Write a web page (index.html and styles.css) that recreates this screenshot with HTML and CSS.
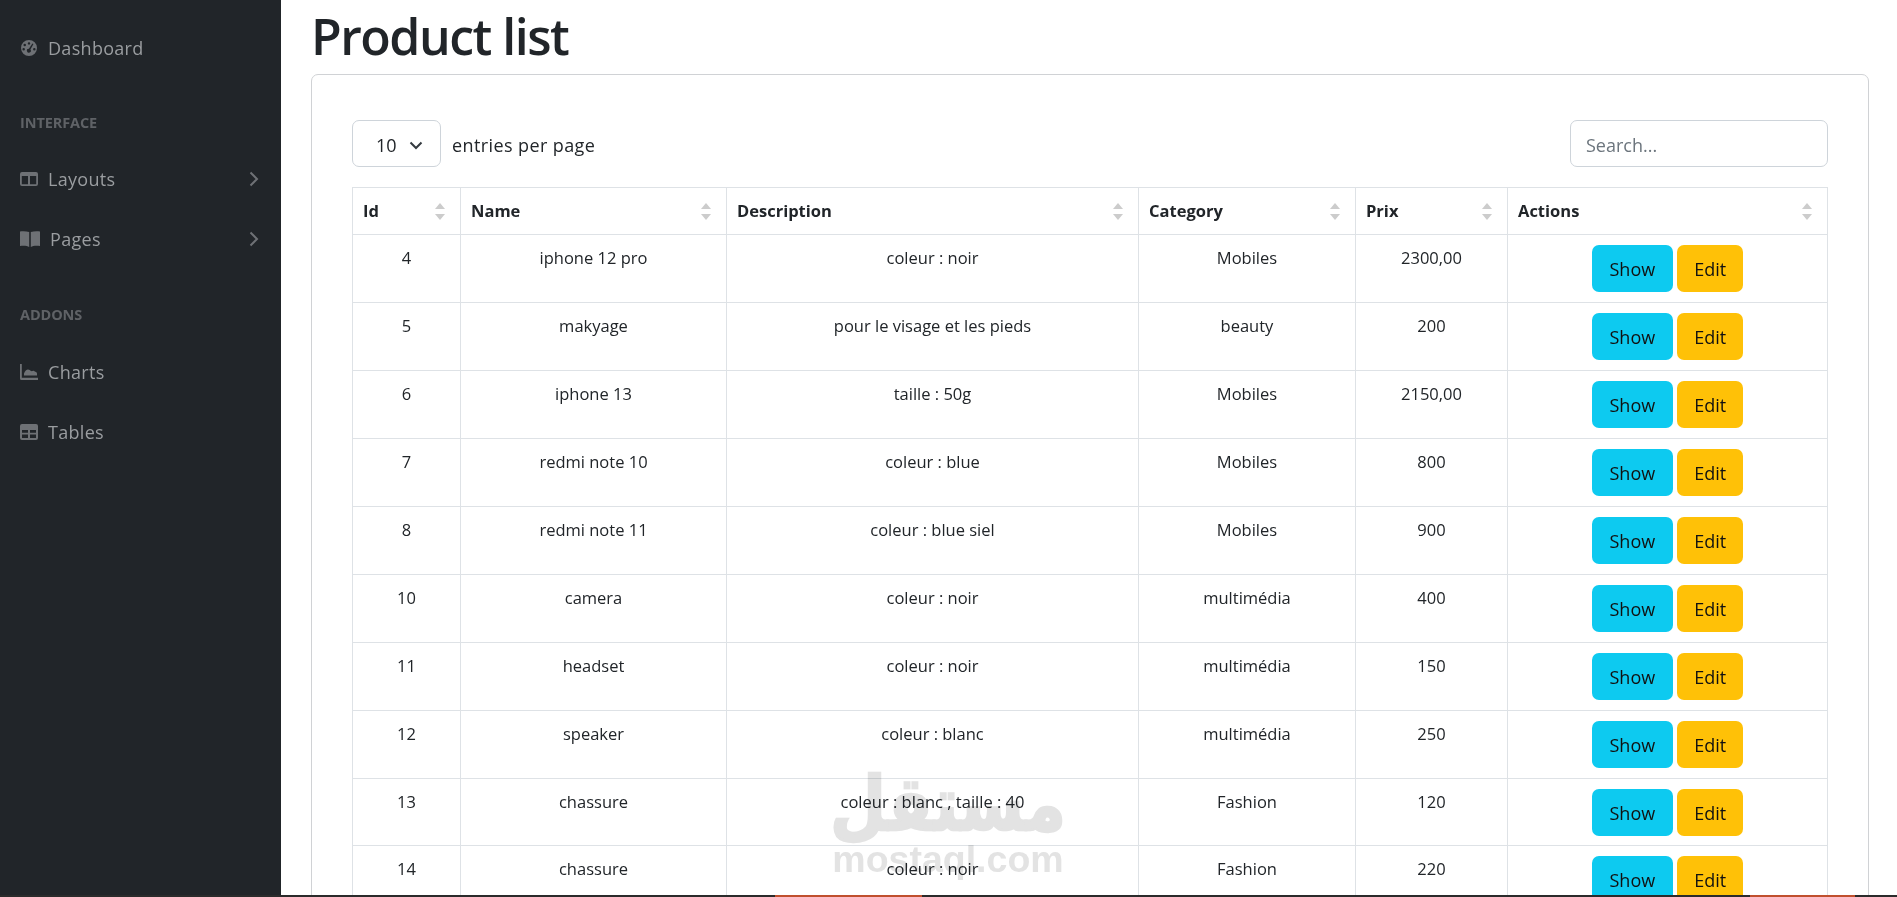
FILE: index.html
```html
<!DOCTYPE html>
<html lang="en">
<head>
  <meta charset="UTF-8" />
  <title>Product list</title>
  <link rel="stylesheet" href="styles.css">
</head>
<body>
  <div class="layout">

    <!-- sidebar -->
    <nav class="sidebar">
      <a class="nav-link first">
        <svg class="nav-icon" viewBox="0 0 18 18"><path fill-rule="evenodd" d="M9 0a9 9 0 1 0 0 18A9 9 0 0 0 9 0zM9 2.400a1.400 1.400 0 1 1 0 2.800 1.400 1.400 0 0 1 0-2.800zM4.200 4.200a1.400 1.400 0 1 1 0 2.800 1.400 1.400 0 0 1 0-2.800zM3 9a1.400 1.400 0 1 1 0 2.800A1.400 1.400 0 0 1 3 9zm12 0a1.400 1.400 0 1 1 0 2.800A1.400 1.400 0 0 1 15 9zm-2.200-5.200l1.200.7-3.400 6.300a2.200 2.200 0 1 1-1.700-.9z"/></svg>
        <span>Dashboard</span>
      </a>
      <div class="nav-heading">INTERFACE</div>
      <a class="nav-link">
        <svg class="nav-icon" viewBox="0 0 18 16"><path fill-rule="evenodd" d="M2 1h14a2 2 0 0 1 2 2v10a2 2 0 0 1-2 2H2a2 2 0 0 1-2-2V3a2 2 0 0 1 2-2zm-.2 4v8.200h6.200V5zm8.200 0v8.200h6.200V5z"/></svg>
        <span>Layouts</span>
        <svg class="nav-arrow" viewBox="0 0 10 16"><path d="M1.500 1.500 8 8l-6.500 6.500"/></svg>
      </a>
      <a class="nav-link">
        <svg class="nav-icon wide" viewBox="0 0 20 16"><path d="M0 .5C3 0 6.500.2 9.200 1v15C7 14.500 3 14.500 0 15zM20 .5C17 0 13.500.2 10.800 1v15c2.200-1.500 6.200-1.500 9.200-1z"/></svg>
        <span>Pages</span>
        <svg class="nav-arrow" viewBox="0 0 10 16"><path d="M1.500 1.500 8 8l-6.500 6.500"/></svg>
      </a>
      <div class="nav-heading second">ADDONS</div>
      <a class="nav-link">
        <svg class="nav-icon" viewBox="0 0 18 16"><path d="M0 0h1.800v13.800H18V16H1.500A1.500 1.500 0 0 1 0 14.500zM4 11.500V9.500C5 7 6.500 5.500 8 5.500s2 1 3 1.500 2-.5 3 0 3 1 3 2.500v2z"/></svg>
        <span>Charts</span>
      </a>
      <a class="nav-link">
        <svg class="nav-icon" viewBox="0 0 18 16"><path fill-rule="evenodd" d="M2 0h14a2 2 0 0 1 2 2v12a2 2 0 0 1-2 2H2a2 2 0 0 1-2-2V2a2 2 0 0 1 2-2zM2 6v2.800h6V6zm8 0v2.800h6V6zM2 10.600V14h6v-3.400zm8 0V14h6v-3.400z"/></svg>
        <span>Tables</span>
      </a>
    </nav>

    <!-- main content -->
    <main class="content">
      <h1>Product list</h1>
      <div class="card">
        <div class="table-top">
          <div class="per-page">
            <div class="page-select">
              <span>10</span>
              <svg viewBox="0 0 16 16"><path d="M2.500 5.500 8 11l5.500-5.500"/></svg>
            </div>
            <label>entries per page</label>
          </div>
          <div class="search">Search...</div>
        </div>

        <table class="products">
          <thead>
            <tr>
              <th class="col-id">Id<i class="sorter"></i></th>
              <th class="col-name">Name<i class="sorter"></i></th>
              <th class="col-desc">Description<i class="sorter"></i></th>
              <th class="col-cat">Category<i class="sorter"></i></th>
              <th class="col-prix">Prix<i class="sorter"></i></th>
              <th class="col-act">Actions<i class="sorter"></i></th>
            </tr>
          </thead>
          <tbody id="rows"></tbody>
        </table>
      </div>
    </main>
  </div>

  <!-- watermark -->
  <div class="watermark">
    <div class="wm-ar" lang="ar" dir="rtl">مستقل</div>
    <div class="wm-en">mostaql.com</div>
  </div>

  <!-- taskbar edge -->
  <div class="edge">
    <span class="edge-a"></span><span class="edge-b"></span>
  </div>

<script>
const products=[
  [4,"iphone 12 pro","coleur : noir","Mobiles","2300,00"],
  [5,"makyage","pour le visage et les pieds","beauty","200"],
  [6,"iphone 13","taille : 50g","Mobiles","2150,00"],
  [7,"redmi note 10","coleur : blue","Mobiles","800"],
  [8,"redmi note 11","coleur : blue siel","Mobiles","900"],
  [10,"camera","coleur : noir","multimédia","400"],
  [11,"headset","coleur : noir","multimédia","150"],
  [12,"speaker","coleur : blanc","multimédia","250"],
  [13,"chassure","coleur : blanc , taille : 40","Fashion","120"],
  [14,"chassure","coleur : noir","Fashion","220"]
];
document.getElementById('rows').innerHTML=products.map(p=>
  `<tr>${p.map(v=>`<td>${v}</td>`).join('')}<td class="actions"><a class="btn btn-show">Show</a> <a class="btn btn-edit">Edit</a></td></tr>`
).join('');
</script>
</body>
</html>
```

FILE: styles.css
```css
*{box-sizing:border-box}
html,body{height:100%}
body{
  margin:0;
  font-family:"Open Sans","Noto Sans",sans-serif;
  font-size:16px;
  color:#212529;
  background:#fff;
  overflow:hidden;
}
.layout{display:flex;height:897px;overflow:hidden}

/* sidebar */
.sidebar{
  flex:0 0 281px;
  background:#212529;
  padding:24px 20px 0;
  color:#9a9da0;
}
.nav-link{display:flex;align-items:center;height:48px;font-size:18px;letter-spacing:.3px}
.nav-link + .nav-link{margin-top:12px}
.nav-icon{width:18px;height:16px;fill:#6e7175;margin-right:10px;flex-shrink:0}
.nav-icon.wide{width:20px;margin-right:10px}
.nav-arrow{width:10px;height:16px;margin-left:auto;margin-right:2px;fill:none;stroke:#6e7175;stroke-width:2}
.nav-heading{font-size:14.500px;font-weight:700;color:#5f6266;letter-spacing:-.1px;margin:42px 0 23px;line-height:18px}
.nav-heading.second{margin:42.500px 0 24px}

/* main */
.content{flex:1;min-width:0;padding:0 28px 0 30px}
h1{
  margin:0;
  font-size:50px;
  font-weight:600;
  line-height:72px;
  height:74px;
  letter-spacing:-1.500px;
}
.card{
  border:1px solid #d0d2d5;
  border-radius:7px 7px 0 0;
  padding:45px 40px 0;
  height:900px;
}
.table-top{display:flex;justify-content:space-between;align-items:center;height:47px;margin-bottom:20px}
.per-page{display:flex;align-items:center;gap:11px}
.per-page label{font-size:18px;letter-spacing:.4px;padding-top:2px}
.page-select{
  width:89px;
  height:47px;
  border:1px solid #ced4da;
  border-radius:7px;
  display:flex;
  align-items:center;
  padding:2px 0 0 23px;
  gap:11px;
  font-size:18px;
}
.page-select svg{width:16px;height:16px;fill:none;stroke:#343a40;stroke-width:2}
.search{
  width:258px;
  height:47px;
  border:1px solid #ced4da;
  border-radius:7px;
  padding:2px 0 0 15px;
  display:flex;
  align-items:center;
  font-size:18px;
  color:#6c757d;
}

/* table */
.products{
  width:1476px;
  table-layout:fixed;
  border-collapse:collapse;
  font-size:16.500px;
}
.products th,.products td{border:1px solid #dee2e6}
.products th{
  position:relative;
  height:47px;
  padding:0 10px 2px;
  text-align:left;
  font-weight:700;
  font-size:16.500px;
}
.products td{height:67.950px;padding:11px 10px 0;text-align:center;vertical-align:top}
.products td.actions{padding-top:10px}
.col-id{width:108px}
.col-name{width:266px}
.col-desc{width:412px}
.col-cat{width:217px}
.col-prix{width:152px}
.sorter{position:absolute;right:15px;top:15px;width:10px;height:17px}
.sorter::before,.sorter::after{
  content:"";
  position:absolute;
  left:0;
  border-left:5px solid transparent;
  border-right:5px solid transparent;
}
.sorter::before{top:0;border-bottom:6px solid #ccc}
.sorter::after{bottom:0;border-top:6px solid #ccc}

.btn{
  display:inline-block;
  vertical-align:top;
  height:47px;
  line-height:48px;
  border-radius:7px;
  font-size:18px;
  color:#111;
}
.btn-show{background:#0dcaf0;width:81px}
.btn-edit{background:#ffc107;width:66px}

/* watermark over the page */
.watermark{
  position:absolute;
  left:830px;
  top:769px;
  width:236px;
  text-align:center;
  color:#e3e3e3;
  mix-blend-mode:multiply;
  pointer-events:none;
}
.wm-ar{
  font-family:"DejaVu Sans",sans-serif;
  font-weight:700;
  font-size:62px;
  line-height:72px;
  -webkit-text-stroke:2px #e3e3e3;
  transform:scale(1.04,1.2);
}
.wm-en{font-family:"Liberation Sans",sans-serif;font-weight:700;font-size:37.500px;line-height:40px;margin-top:-2px}

.edge{position:absolute;left:0;right:0;top:895px;height:2px;background:#2b2b2b}
.edge-a{position:absolute;left:775px;width:147px;height:2px;background:#c0502e}
.edge-b{position:absolute;left:1750px;width:105px;height:2px;background:#c0502e}
```
